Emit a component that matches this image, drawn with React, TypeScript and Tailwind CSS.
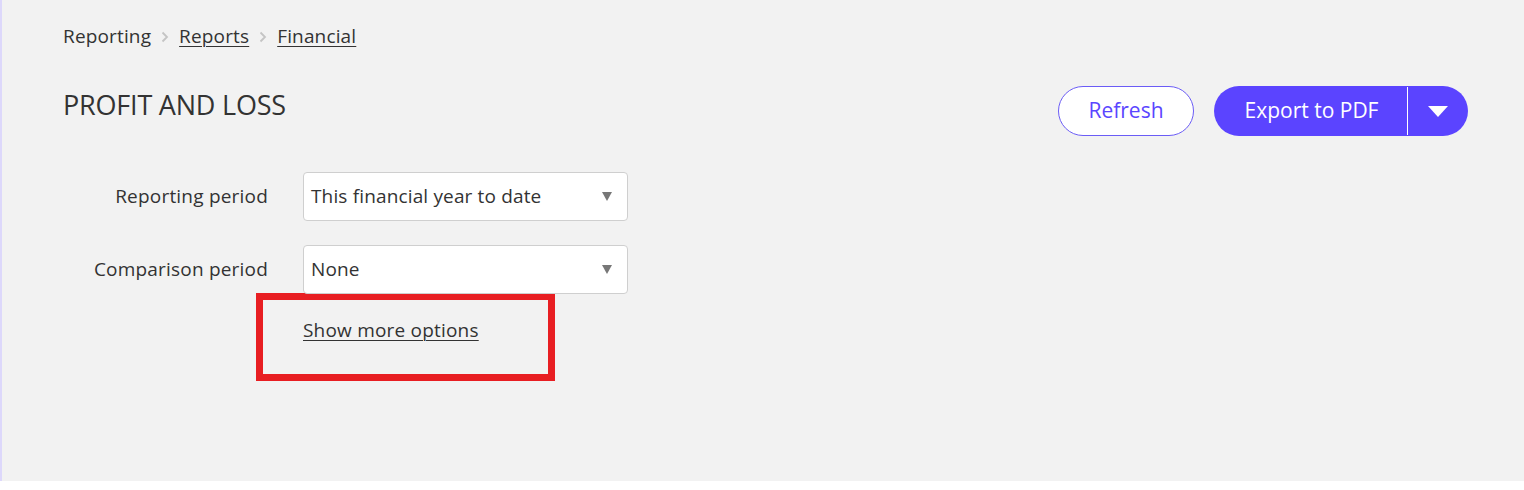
import React from 'react';

const font = { fontFamily: '"Open Sans", "Liberation Sans", sans-serif' };

const Chevron: React.FC = () => (
  <svg width="8" height="12" viewBox="0 0 8 12" className="mx-[10px]">
    <path d="M1.5 1.5 L6 6 L1.5 10.5" fill="none" stroke="#c4c4c4" strokeWidth="1.8" />
  </svg>
);

const SelectBox: React.FC<{ value: string }> = ({ value }) => (
  <div className="w-[325px] h-[49px] bg-white border border-[#cfcfcf] rounded-[4px] flex items-center justify-between pl-[7px] pr-[15px]">
    <span className="text-[19px] text-[#333] tracking-[0.15px]">{value}</span>
    <svg width="10" height="9" viewBox="0 0 10 9">
      <path d="M0 0 H10 L5 9 Z" fill="#777" />
    </svg>
  </div>
);

const FieldRow: React.FC<{ label: string; value: string }> = ({ label, value }) => (
  <div className="flex items-center">
    <div className="w-[205px] text-right text-[19px] text-[#333] tracking-[0.2px]">{label}</div>
    <div className="ml-[35px]">
      <SelectBox value={value} />
    </div>
  </div>
);

export default function App() {
  return (
    <div className="w-[1524px] h-[490px] bg-white" style={font}>
      <div className="h-[481px] bg-[#f2f2f2] border-l-2 border-[#ddd8fb] pl-[61px] pr-[56px]">
        {/* breadcrumb */}
        <div className="flex items-center pt-[23px] text-[19px] text-[#333] leading-[27px] tracking-[0.15px]">
          <span>Reporting</span>
          <Chevron />
          <a className="underline underline-offset-[3px] decoration-1">Reports</a>
          <Chevron />
          <a className="underline underline-offset-[3px] decoration-1">Financial</a>
        </div>

        {/* header */}
        <div className="flex items-start justify-between mt-[36px]">
          <h1 className="text-[27px] leading-[36px] text-[#333] tracking-[-0.2px] pt-px">PROFIT AND LOSS</h1>
          <div className="flex items-center gap-[20px]">
            <button className="h-[50px] w-[136px] rounded-full border border-[#6b5cf6] bg-white text-[21px] text-[#5b46ff]">
              Refresh
            </button>
            <div className="h-[50px] w-[254px] rounded-full bg-[#5b44ff] flex items-center text-white">
              <span className="flex-1 text-center text-[21px] pl-[2px]">Export to PDF</span>
              <div className="w-px h-[48px] bg-white" />
              <div className="w-[60px] flex justify-center">
                <svg width="20" height="11" viewBox="0 0 20 11">
                  <path d="M0 0 H20 L10 11 Z" fill="#fff" />
                </svg>
              </div>
            </div>
          </div>
        </div>

        {/* form */}
        <div className="mt-[36px] flex flex-col gap-[24px]">
          <FieldRow label="Reporting period" value="This financial year to date" />
          <FieldRow label="Comparison period" value="None" />
        </div>

        <div className="ml-[193px] -mt-px w-[299px] h-[88px] border-[7px] border-[#e81e22] pl-[40px] pt-[17px]">
          <a className="text-[19px] leading-[27px] text-[#333] underline underline-offset-[3px] decoration-1 tracking-[0.2px]">
            Show more options
          </a>
        </div>
      </div>
    </div>
  );
}
